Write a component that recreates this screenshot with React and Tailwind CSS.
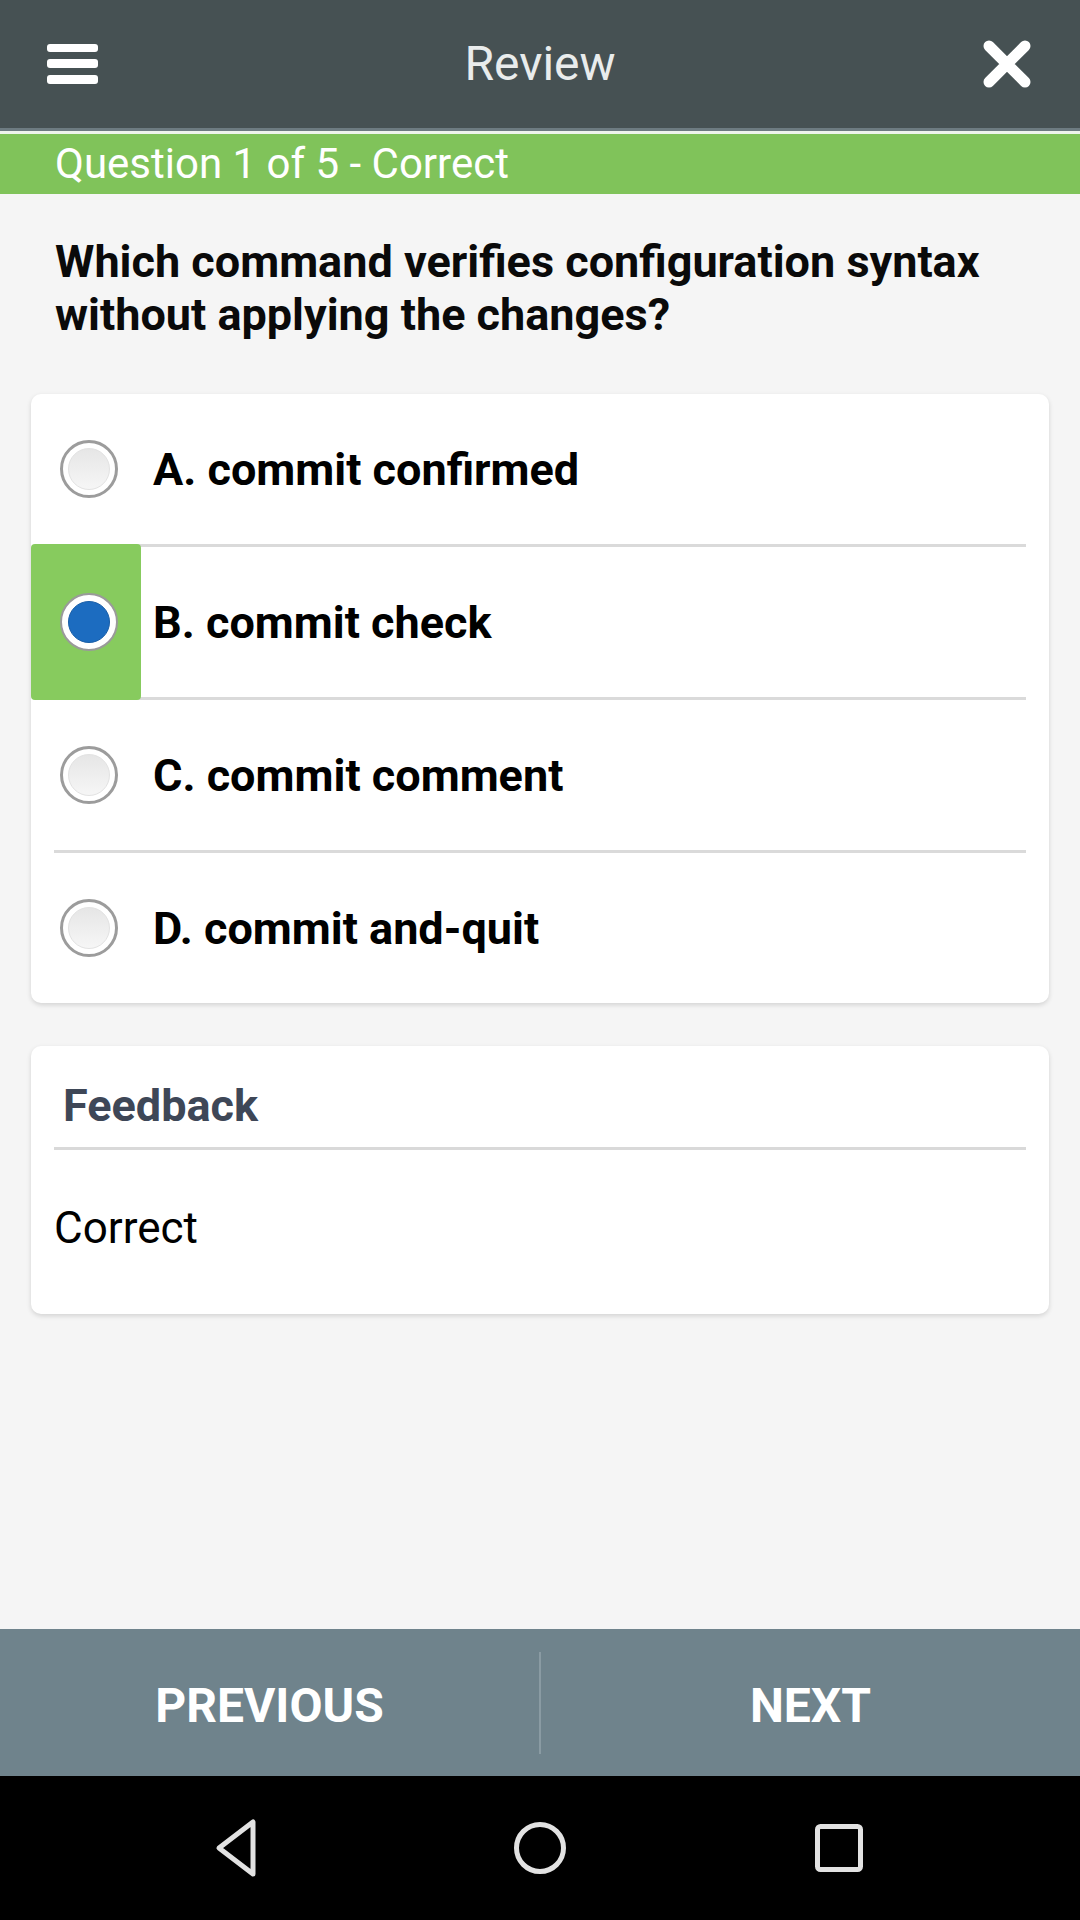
import React from "react";

function Radio({ selected }) {
  if (selected) {
    return (
      <div className="w-[58px] h-[58px] rounded-full border-[2px] border-[#9a9a9a] bg-white flex items-center justify-center shrink-0">
        <div className="w-[42px] h-[42px] rounded-full bg-[#1c6cc0] border border-[#185ea8]" />
      </div>
    );
  }
  return (
    <div className="w-[58px] h-[58px] rounded-full border-[3px] border-[#9c9c9c] bg-white flex items-center justify-center shrink-0">
      <div className="w-[42px] h-[42px] rounded-full bg-linear-to-b from-[#e6e6e6] to-[#f6f6f6] border border-[#e2e2e2]" />
    </div>
  );
}

const options = [
  { label: "A. commit confirmed", selected: false },
  { label: "B. commit check", selected: true },
  { label: "C. commit comment", selected: false },
  { label: "D. commit and-quit", selected: false },
];

export default function App() {
  return (
    <div
      className="w-[1080px] h-[1920px] flex flex-col bg-[#f5f5f5]"
      style={{ fontFamily: "Roboto, 'Noto Sans', sans-serif" }}
    >
      {/* Header */}
      <div className="h-[128px] bg-[#465153] flex items-center justify-between px-[47px] relative shrink-0">
        <div className="flex flex-col gap-[7px] w-[51px]">
          <div className="h-[8px] rounded-[3px] bg-white" />
          <div className="h-[9px] rounded-[3px] bg-white" />
          <div className="h-[9px] rounded-[3px] bg-white" />
        </div>
        <div className="absolute inset-x-0 top-0 h-[128px] flex items-center justify-center pointer-events-none">
          <span className="text-[48px] text-[#e9ecec] leading-none">Review</span>
        </div>
        <svg width="50" height="50" viewBox="0 0 50 50" className="mr-[1px]">
          <path d="M7 7 L43 43 M43 7 L7 43" stroke="white" strokeWidth="11" strokeLinecap="round" />
        </svg>
      </div>
      <div className="h-[3px] bg-[#6d7b81] shrink-0" />
      <div className="h-[3px] bg-[#eef4ec] shrink-0" />
      <div className="h-[60px] bg-[#80c35a] flex items-center px-[55px] shrink-0">
        <span className="text-[42px] text-white leading-none">Question 1 of 5 - Correct</span>
      </div>

      {/* Question */}
      <div className="px-[55px] pt-[41px]">
        <p className="text-[45px] font-bold leading-[53px] text-[#0a0a0a]">
          Which command verifies configuration syntax without applying the changes?
        </p>
      </div>

      {/* Options card */}
      <div className="mx-[31px] mt-[53px] bg-white rounded-[10px] shadow-[0_2px_5px_rgba(0,0,0,0.14)]">
        {options.map((o, i) => (
          <div key={i}>
            {i > 0 && <div className="h-[3px] bg-[#dadada] ml-[23px] mr-[23px]" />}
            <div className="relative h-[150px] flex items-center pl-[29px]">
              {o.selected && (
                <div className="absolute left-0 top-[-3px] bottom-[-3px] w-[110px] bg-[#87cb5e] rounded-[4px]" />
              )}
              <div className="relative">
                <Radio selected={o.selected} />
              </div>
              <span className="relative ml-[35px] text-[45px] font-bold text-black leading-none">
                {o.label}
              </span>
            </div>
          </div>
        ))}
      </div>

      {/* Feedback card */}
      <div className="mx-[31px] mt-[43px] bg-white rounded-[10px] shadow-[0_2px_5px_rgba(0,0,0,0.14)] pt-[33px] pb-[60px] px-[23px]">
        <div className="pl-[9px] text-[45px] font-bold leading-[53px] text-[#3e4757]">Feedback</div>
        <div className="h-[3px] bg-[#d9d9d9] mt-[15px]" />
        <div className="mt-[52px] text-[44px] leading-[52px] text-black">Correct</div>
      </div>

      <div className="flex-1" />

      {/* Bottom buttons */}
      <div className="h-[147px] bg-[#6f838c] flex items-center shrink-0">
        <div className="flex-1 flex items-center justify-center pt-[6px]">
          <span className="text-[48px] font-bold text-white leading-none">PREVIOUS</span>
        </div>
        <div className="w-[2px] h-[102px] bg-[#8a9ba3]" />
        <div className="flex-1 flex items-center justify-center pt-[6px]">
          <span className="text-[48px] font-bold text-white leading-none">NEXT</span>
        </div>
      </div>

      {/* Android nav bar */}
      <div className="h-[144px] bg-black flex items-center shrink-0">
        <div className="flex-1 flex items-center justify-center">
          <svg width="60" height="64" viewBox="0 0 60 64" className="ml-[-38px]">
            <path d="M46 6 L46 58 L12 32 Z" fill="none" stroke="#e2e2e2" strokeWidth="5" strokeLinejoin="round" />
          </svg>
        </div>
        <div className="flex items-center justify-center">
          <svg width="56" height="56" viewBox="0 0 56 56">
            <circle cx="28" cy="28" r="23.5" fill="none" stroke="#e2e2e2" strokeWidth="5" />
          </svg>
        </div>
        <div className="flex-1 flex items-center justify-center">
          <svg width="52" height="52" viewBox="0 0 52 52" className="mr-[-30px]">
            <rect x="4.5" y="4.5" width="43" height="43" rx="3" fill="none" stroke="#e2e2e2" strokeWidth="5" />
          </svg>
        </div>
      </div>
    </div>
  );
}
